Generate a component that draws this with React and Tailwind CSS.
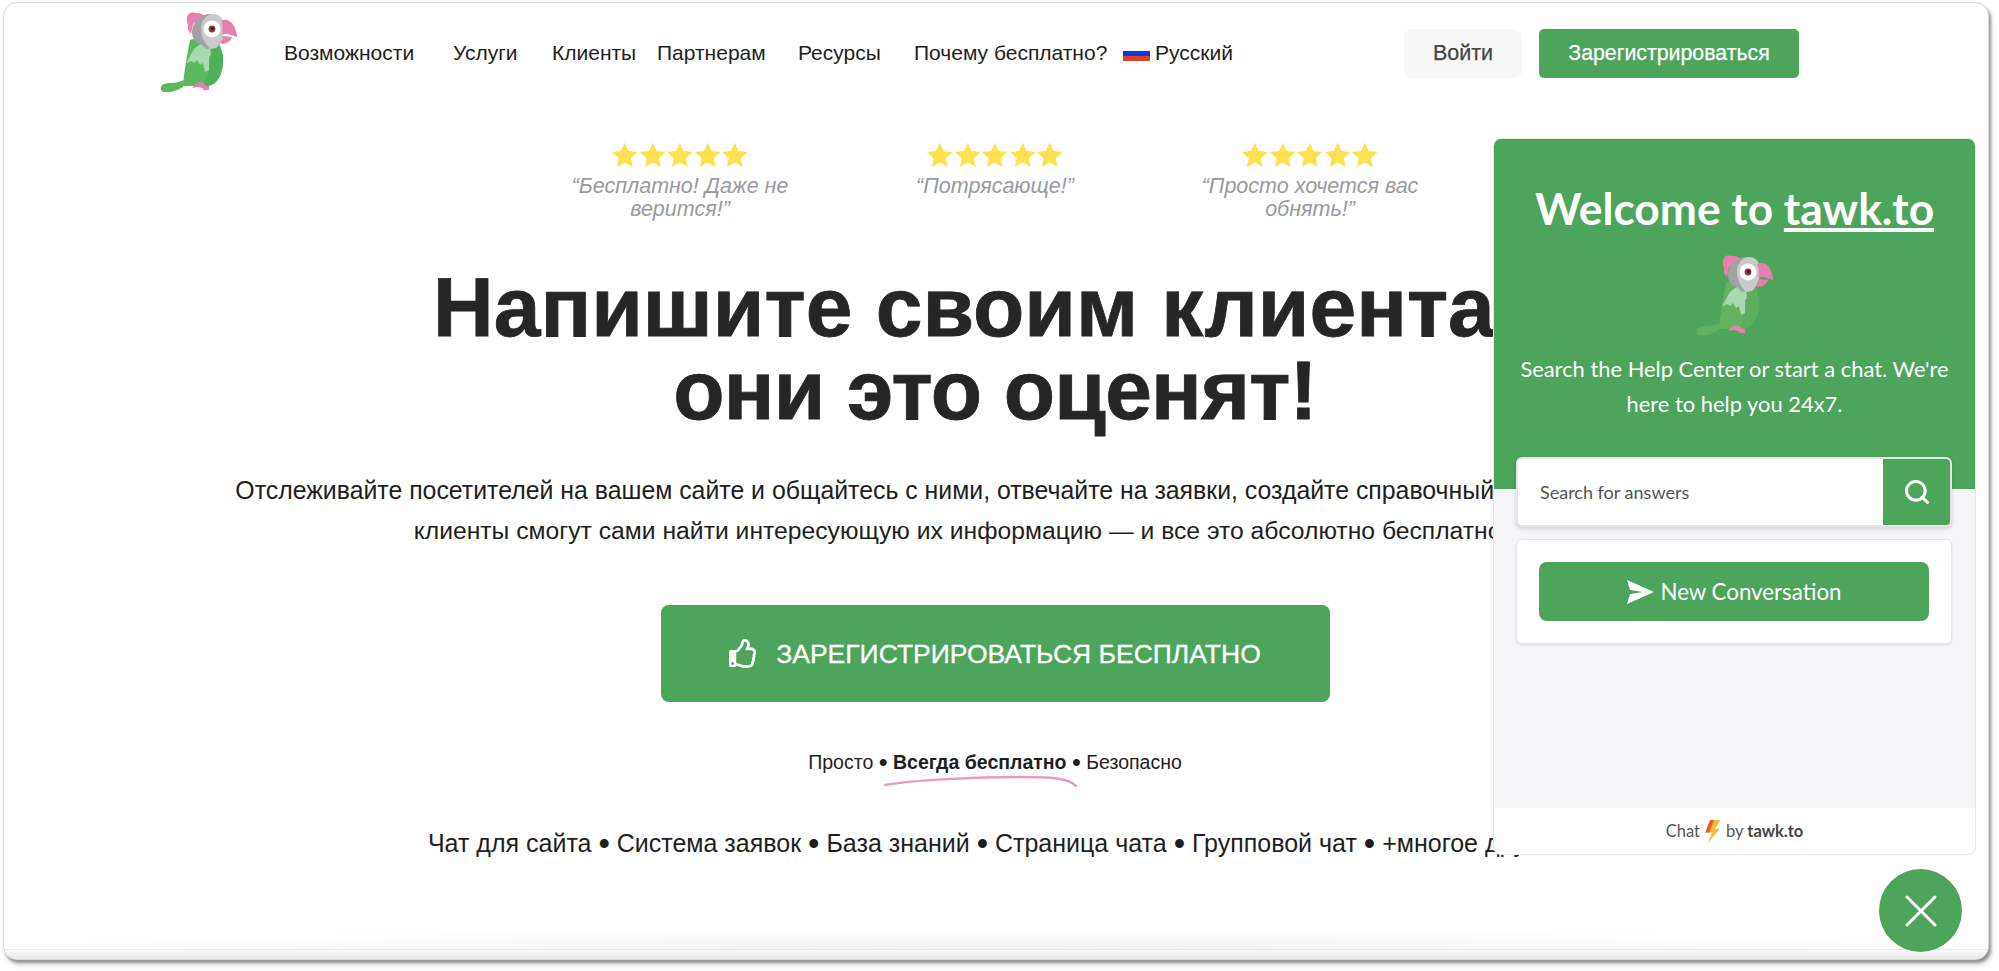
import React from "react";
import { FaRegThumbsUp } from "react-icons/fa";
import { Search } from "lucide-react";

function Parrot({ inWidget = false, className = "" }) {
  const green = inWidget ? "#63b360" : "#5cb85f";
  const dark = inWidget ? "#5aae5c" : "#4fb05a";
  return (
    <svg viewBox="20 10 78 84" className={className}>
      <path d="M21 87c1-3 5-4 9-4 6 0 10-1 14-3l-1 7c-5 3-11 6-18 5-3 0-5-2-4-5z" fill={inWidget ? "#5fb262" : green} />
      <path d="M50 40c8-3 28-2 31 8 3 11 1 25-5 33-4 5-10 6-16 5l-17 0c1-13 4-31 7-46z" fill={green} />
      <path d="M70 46c8-2 12 3 13 10 1 11-2 22-8 27-4 3-9 3-13 3 7-10 10-25 8-40z" fill={dark} />
      <path d="M46 63l8-14 8-6 8 3 1 9-2 2 0 13-4 2-2-9-3 2-3-5-3 3-2-2-3 1z" fill="#a6dab0" />
      <path d="M60 82c-3 0-6 4-8 6 4-1 7-1 10 0l2 2 5 0 0-4-3 0c-2-3-4-4-6-4z" fill="#e87fae" />
      <path d="M47 22c-1-4 1-8 3-9 2-1 4 0 7 0 4 0 7 2 8 3l-12 8-2 10-3-4 0-5z" fill="#ea80b0" />
      <path d="M52 32c0-10 9-18 18-18 8 0 14 5 14 13 0 9-2 17-8 21l-10 1-4-4-6-3c-3-3-4-6-4-10z" fill="#a2a2a2" />
      <path d="M61 30c-1-8 5-16 12-16 7 0 11 5 11 13 0 9-3 16-8 21l-6 1-4-5c-3-4-5-9-5-14z" fill="#cacaca" />
      <circle cx="72" cy="29" r="8.5" fill="#ffffff" />
      <circle cx="72" cy="29" r="3.4" fill="#8a3a3a" />
      <circle cx="72.5" cy="28.5" r="1.5" fill="#2a1a1a" />
      <path d="M81 21c5-3 10 0 13 5 2 4 3 8 3 11l-9-3-6 0c1-4 1-9-1-13z" fill="#e87fae" />
      <path d="M83 36l9 1c-1 4-5 6-9 7l-3-1c2-2 3-4 3-7z" fill="#e87fae" />
    </svg>
  );
}

function Star() {
  return (
    <svg viewBox="0 0 24 24" className="w-[27.5px] h-[26px]" fill="#ffe14f">
      <path d="M12 .8l3.5 7.6 8.3.9-6.2 5.6 1.7 8.2L12 18.9l-7.3 4.2 1.7-8.2L.2 9.3l8.3-.9z" />
    </svg>
  );
}

function Stars() {
  return (
    <div className="flex">
      <Star /><Star /><Star /><Star /><Star />
    </div>
  );
}

function Quote({ children }) {
  return (
    <div className="w-[315px] flex flex-col items-center">
      <Stars />
      <p className="mt-[7px] text-center italic text-[21.5px] leading-[23px] text-[#9a9a9e] w-[240px]">{children}</p>
    </div>
  );
}

function Dot() {
  return <span className="text-[1.3em] leading-none align-[-0.08em]">•</span>;
}

export default function App() {
  return (
    <div className="relative w-[1999px] h-[971px] overflow-hidden bg-white font-['Liberation_Sans',sans-serif] text-[#1e1e1e]">
      <div className="ml-[3px] mt-[2px] w-[1986px] h-[958px] rounded-[14px] border border-[#dcdcdc] bg-white shadow-[2px_3px_3px_rgba(0,0,0,0.36),3px_6px_5px_rgba(0,0,0,0.1)] overflow-hidden flex flex-col">
        <header className="flex items-start h-[92px] shrink-0 pl-[156px]">
          <Parrot className="w-[78px] h-[84px] mt-[7px]" />
          <nav className="flex items-center w-[1120px] mt-[29px] ml-[46px] text-[21px] leading-[42px] whitespace-nowrap">
            <a className="w-[169px]">Возможности</a>
            <a className="w-[99px]">Услуги</a>
            <a className="w-[105px]">Клиенты</a>
            <a className="w-[141px]">Партнерам</a>
            <a className="w-[116px]">Ресурсы</a>
            <a className="w-[209px]">Почему бесплатно?</a>
            <span className="w-[27px] h-[15px] flex flex-col overflow-hidden">
              <span className="h-[5px] bg-white" />
              <span className="h-[5px] bg-[#0a35e8]" />
              <span className="h-[5px] bg-[#e2401c]" />
            </span>
            <a className="ml-[5px]">Русский</a>
          </nav>
          <a className="mt-[26px] w-[118px] h-[49px] rounded-lg bg-[#f7f7f7] flex items-center justify-center text-[21.5px] text-[#444] [-webkit-text-stroke:0.25px_#444]">Войти</a>
          <a className="ml-[17px] mt-[26px] w-[260px] h-[49px] rounded-[5px] bg-[#4ca55b] flex items-center justify-center text-[21.3px] text-white [-webkit-text-stroke:0.25px_#fff]">Зарегистрироваться</a>
        </header>

        <div className="flex flex-col items-center pr-[2px]">
          <div className="flex justify-center mt-[47px] h-[70px]">
            <Quote>“Бесплатно! Даже не верится!”</Quote>
            <Quote>“Потрясающе!”</Quote>
            <Quote>“Просто хочется вас обнять!”</Quote>
          </div>
          <h1 className="mt-[54px] text-center font-bold text-[84px] leading-[83px] whitespace-nowrap text-[#262626] [-webkit-text-stroke:0.8px_#262626]">
            Напишите своим клиентам<br /><span className="tracking-[-0.8px]">они это оценят!</span>
          </h1>
          <p className="mt-[39px] text-center text-[24.7px] leading-[40px] whitespace-nowrap">
            <span className="inline-block pr-[137px] text-[24.85px]">Отслеживайте посетителей на вашем сайте и общайтесь с ними, отвечайте на заявки, создайте справочный центр, где</span><br />
            <span className="inline-block pr-[68px]">клиенты смогут сами найти интересующую их информацию — и все это абсолютно бесплатно!</span>
          </p>
          <a className="mt-[54px] w-[669px] h-[97px] rounded-lg bg-[#4ca55b] flex items-center justify-center gap-[18px] text-white text-[26.5px] [-webkit-text-stroke:0.3px_#fff]">
            <FaRegThumbsUp className="w-[29px] h-[29px]" />
            <span className="mt-[2px]">ЗАРЕГИСТРИРОВАТЬСЯ БЕСПЛАТНО</span>
          </a>
          <div className="relative mt-[48px] text-[19.5px] leading-[24px] whitespace-nowrap">
            Просто <Dot /> <b>Всегда бесплатно</b> <Dot /> Безопасно
            <svg viewBox="0 0 193 14" className="absolute left-[76px] top-[23px] w-[193px] h-[14px]">
              <path d="M1 12C30 7 90 4 140 4c25 0 45 1 52 9" fill="none" stroke="#ea9ac0" strokeWidth="2.4" strokeLinecap="round" />
            </svg>
          </div>
          <p className="mt-[51px] text-[25px] leading-[34px] whitespace-nowrap">
            Чат для сайта <Dot /> Система заявок <Dot /> База знаний <Dot /> Страница чата <Dot /> Групповой чат <Dot /> +многое другое
          </p>
        </div>

        <div className="mt-auto h-[20px] shrink-0 bg-[radial-gradient(ellipse_50%_100%_at_50%_100%,#f1f1f1,#ffffff)]" />
        <div className="h-[10px] shrink-0 border-t border-[#e8e8e8] bg-gradient-to-b from-[#fafafa] to-[#e8e8e8]" />
      </div>

      <div className="absolute left-[1493px] top-[138px] w-[483px] h-[717px] rounded-lg bg-[#f5f6f8] border border-[#e6e6e6] overflow-hidden flex flex-col font-['Lato',sans-serif]">
        <div className="h-[350px] shrink-0 bg-[#4ca55b] text-white flex flex-col items-center">
          <h2 className="mt-[39px] text-[44.3px] leading-[60px] font-bold whitespace-nowrap">Welcome to <span className="underline">tawk.to</span></h2>
          <Parrot inWidget className="w-[78px] h-[84px] mt-[15px]" />
          <p className="mt-[14px] text-center text-[21.9px] leading-[35px] whitespace-nowrap">Search the Help Center or start a chat. We're<br />here to help you 24x7.</p>
        </div>
        <div className="flex-1 pl-[22px] pr-[23px]">
          <div className="-mt-[32px] h-[70px] rounded-md bg-white border-2 border-[#e4e6ea] shadow-[0_2px_4px_rgba(0,0,0,0.15)] flex items-stretch overflow-hidden">
            <div className="flex-1 flex items-center pl-[22px] text-[18px] text-[#555]">Search for answers</div>
            <div className="w-[67px] bg-[#4ca55b] flex items-center justify-center text-white"><Search className="w-[28px] h-[28px]" strokeWidth={2.6} /></div>
          </div>
          <div className="mt-[12px] h-[105px] rounded-md bg-white border border-[#e6e6e6] shadow-[0_1px_3px_rgba(0,0,0,0.1)] px-[22px] pt-[22px]">
            <div className="h-[59px] rounded-lg bg-[#4ca55b] flex items-center justify-center text-white text-[22.3px] gap-[6px]">
              <svg viewBox="0 0 28 24" className="w-[28px] h-[24px]"><path d="M1 0l27 12L1 24l3-10 13-2-13-2z" fill="#fff" /></svg>
              New Conversation
            </div>
          </div>
        </div>
        <div className="h-[46px] shrink-0 bg-white flex items-center justify-center text-[16.5px] text-[#555]">
          Chat
          <svg viewBox="0 0 16 24" className="mx-[5px] w-[16px] h-[23px]"><path d="M5 0h11L10 9h5L3 24l4-11H0z" fill="#f6bb3c" /><path d="M5 0h4L4 13H0z" fill="#e8582c" /></svg>
          by&nbsp;<b className="text-[#444]">tawk.to</b>
        </div>
      </div>

      <div className="absolute left-[1879px] top-[869px] w-[83px] h-[83px] rounded-full bg-[#4ca55b] flex items-center justify-center">
        <svg viewBox="0 0 32 32" className="w-[32px] h-[32px]"><path d="M2 2l28 28M30 2L2 30" stroke="#fff" strokeWidth="3" strokeLinecap="round" /></svg>
      </div>
    </div>
  );
}
